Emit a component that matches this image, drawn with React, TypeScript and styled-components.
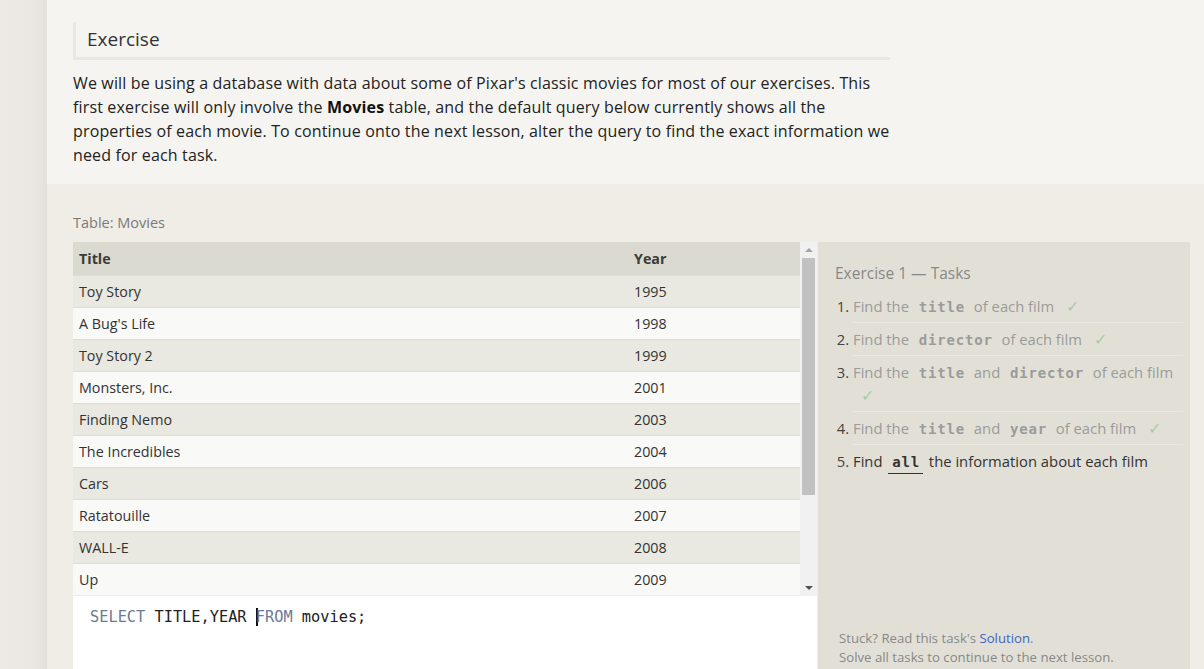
import React from "react";
import styled, { createGlobalStyle } from "styled-components";

const GlobalStyle = createGlobalStyle`
  html, body { margin: 0; padding: 0; }
  body {
    background: #edeae6;
    font-family: "Open Sans", "Noto Sans", sans-serif;
    overflow: hidden;
    height: 669px;
  }
`;

const Page = styled.div`
  display: flex;
  width: 1204px;
  height: 669px;
  overflow: hidden;
`;

const Gutter = styled.div`
  width: 47px;
  flex: none;
  background: linear-gradient(to right, #edeae6 0px, #ebe8e4 32px, #e3e0dc 47px);
`;

const Main = styled.div`
  flex: 1;
  display: flex;
  flex-direction: column;
  min-width: 0;
`;

const Intro = styled.section`
  background: #f5f4f0;
  padding: 22px 0 0 26px;
  height: 184px;
  box-sizing: border-box;
`;

const IntroInner = styled.div`
  width: 817px;
`;

const Heading = styled.h2`
  margin: 0;
  font-weight: 400;
  font-size: 19px;
  color: #333;
  padding: 5px 0 5px 11px;
  border-left: 3px solid #e9e7e1;
  border-bottom: 3px solid #e9e7e1;
  line-height: 25px;
`;

const Paragraph = styled.p`
  margin: 11px 0 0;
  width: 840px;
  font-size: 16px;
  line-height: 24px;
  color: #222;
  letter-spacing: 0.15px;
  white-space: nowrap;
  strong { font-weight: 700; color: #111; }
`;

const Work = styled.section`
  flex: 1;
  background: #efede6;
  padding: 29px 14px 0 26px;
  display: flex;
  flex-direction: column;
`;

const TableLabel = styled.div`
  font-size: 14.5px;
  color: #7a7a7a;
  line-height: 20px;
  margin-bottom: 9px;
`;

const Workspace = styled.div`
  display: flex;
  flex: 1;
`;

const LeftCol = styled.div`
  width: 744px;
  display: flex;
  flex-direction: column;
`;

const TableBox = styled.div`
  height: 354px;
  display: flex;
  overflow: hidden;
`;

const TableClip = styled.div`
  flex: 1;
  overflow: hidden;
`;

const Table = styled.table`
  width: 100%;
  border-collapse: collapse;
  font-size: 14.3px;
  color: #333;
`;

const Th = styled.th<{ $w?: number }>`
  background: #dbdad0;
  height: 33px;
  text-align: left;
  padding: 1px 6px 0;
  font-weight: 700;
  color: #3a3a3a;
  width: ${(p) => (p.$w ? `${p.$w}px` : "auto")};
  box-sizing: border-box;
`;

const Tr = styled.tr<{ $alt: boolean }>`
  background: ${(p) => (p.$alt ? "#f9f9f8" : "#e9e8e1")};
  td { border-top: 1px solid #dedcd4; }
`;

const Td = styled.td`
  height: 31px;
  padding: 0 6px;
  color: #333;
`;

const Scrollbar = styled.div`
  width: 17px;
  flex: none;
  background: #f1f1f1;
  display: flex;
  flex-direction: column;
  align-items: center;
`;

const Arrow = styled.div<{ $down?: boolean }>`
  height: 16px;
  width: 100%;
  display: flex;
  align-items: center;
  justify-content: center;
  &::after {
    content: "";
    border-left: 4px solid transparent;
    border-right: 4px solid transparent;
    ${(p) =>
      p.$down
        ? "border-top: 4px solid #505050;"
        : "border-bottom: 4px solid #a3a3a3;"}
  }
`;

const Thumb = styled.div`
  width: 13px;
  height: 237px;
  background: #c1c1c1;
`;

const Spacer = styled.div`
  flex: 1;
`;

const Editor = styled.div`
  flex: 1;
  background: #fff;
  padding: 11px 17px;
  font-family: "DejaVu Sans Mono", "Liberation Mono", monospace;
  font-size: 15.3px;
  color: #222;
  line-height: 20px;
`;

const Kw = styled.span`
  color: #6b7a96;
`;

const Caret = styled.span`
  display: inline-block;
  width: 2px;
  height: 18px;
  background: #111;
  vertical-align: -4px;
  margin-right: -2px;
`;

const TaskPanel = styled.aside`
  width: 372px;
  margin-left: 1px;
  background: #e2e0d6;
  padding: 19px 7px 0 17px;
  box-sizing: border-box;
  display: flex;
  flex-direction: column;
`;

const TaskTitle = styled.div`
  font-size: 15.5px;
  color: #888;
  line-height: 24px;
  margin-bottom: 5px;
`;

const TaskList = styled.ol`
  margin: 0;
  padding: 0 0 0 18px;
  font-size: 14.8px;
  color: #444;
`;

const Task = styled.li<{ $last?: boolean }>`
  padding: 5px 0 4px;
  line-height: 23px;
  border-bottom: ${(p) => (p.$last ? "none" : "1px solid #ebe9e2")};
`;

const TaskText = styled.span<{ $done: boolean }>`
  color: ${(p) => (p.$done ? "#9b9b9b" : "#333")};
`;

const Code = styled.code<{ $active?: boolean }>`
  font-family: "DejaVu Sans Mono", "Liberation Mono", monospace;
  font-weight: 700;
  font-size: 14px;
  line-height: 1;
  letter-spacing: 0.8px;
  color: ${(p) => (p.$active ? "#333" : "#9b9b9b")};
  padding: 0 3px 3px 4px;
  margin: 0 2px;
  border-bottom: ${(p) => (p.$active ? "1px solid #333" : "none")};
`;

const Check = styled.span`
  color: #a8cca6;
  margin-left: 8px;
  font-size: 16px;
  line-height: 1;
`;

const Footer = styled.div`
  margin-top: auto;
  padding: 0 0 2px 4px;
  font-size: 13.2px;
  line-height: 19px;
  color: #888;
  a { color: #3d63c0; text-decoration: none; }
`;

const movies: [string, number][] = [
  ["Toy Story", 1995],
  ["A Bug's Life", 1998],
  ["Toy Story 2", 1999],
  ["Monsters, Inc.", 2001],
  ["Finding Nemo", 2003],
  ["The Incredibles", 2004],
  ["Cars", 2006],
  ["Ratatouille", 2007],
  ["WALL-E", 2008],
  ["Up", 2009],
];

export default function App() {
  return (
    <>
      <GlobalStyle />
      <Page>
        <Gutter />
        <Main>
          <Intro>
            <IntroInner>
              <Heading>Exercise</Heading>
              <Paragraph>
                We will be using a database with data about some of Pixar's classic movies for most of our exercises. This
                <br />
                first exercise will only involve the <strong>Movies</strong> table, and the default query below currently shows all the
                <br />
                properties of each movie. To continue onto the next lesson, alter the query to find the exact information we
                <br />
                need for each task.
              </Paragraph>
            </IntroInner>
          </Intro>
          <Work>
            <TableLabel>Table: Movies</TableLabel>
            <Workspace>
              <LeftCol>
                <TableBox>
                  <TableClip>
                    <Table>
                      <thead>
                        <tr>
                          <Th $w={555}>Title</Th>
                          <Th>Year</Th>
                        </tr>
                      </thead>
                      <tbody>
                        {movies.map(([t, y], i) => (
                          <Tr key={t} $alt={i % 2 === 1}>
                            <Td>{t}</Td>
                            <Td>{y}</Td>
                          </Tr>
                        ))}
                      </tbody>
                    </Table>
                  </TableClip>
                  <Scrollbar>
                    <Arrow />
                    <Thumb />
                    <Spacer />
                    <Arrow $down />
                  </Scrollbar>
                </TableBox>
                <Editor>
                  <Kw>SELECT</Kw> TITLE,YEAR <Caret />
                  <Kw>FROM</Kw> movies;
                </Editor>
              </LeftCol>
              <TaskPanel>
                <TaskTitle>Exercise 1 — Tasks</TaskTitle>
                <TaskList>
                  <Task>
                    <TaskText $done>
                      Find the <Code>title</Code> of each film
                    </TaskText>{" "}
                    <Check>✓</Check>
                  </Task>
                  <Task>
                    <TaskText $done>
                      Find the <Code>director</Code> of each film
                    </TaskText>{" "}
                    <Check>✓</Check>
                  </Task>
                  <Task>
                    <TaskText $done>
                      Find the <Code>title</Code> and <Code>director</Code> of each film
                    </TaskText>{" "}
                    <Check>✓</Check>
                  </Task>
                  <Task>
                    <TaskText $done>
                      Find the <Code>title</Code> and <Code>year</Code> of each film
                    </TaskText>{" "}
                    <Check>✓</Check>
                  </Task>
                  <Task $last>
                    <TaskText $done={false}>
                      Find <Code $active>all</Code> the information about each film
                    </TaskText>
                  </Task>
                </TaskList>
                <Footer>
                  Stuck? Read this task's <a href="#">Solution</a>.
                  <br />
                  Solve all tasks to continue to the next lesson.
                </Footer>
              </TaskPanel>
            </Workspace>
          </Work>
        </Main>
      </Page>
    </>
  );
}
